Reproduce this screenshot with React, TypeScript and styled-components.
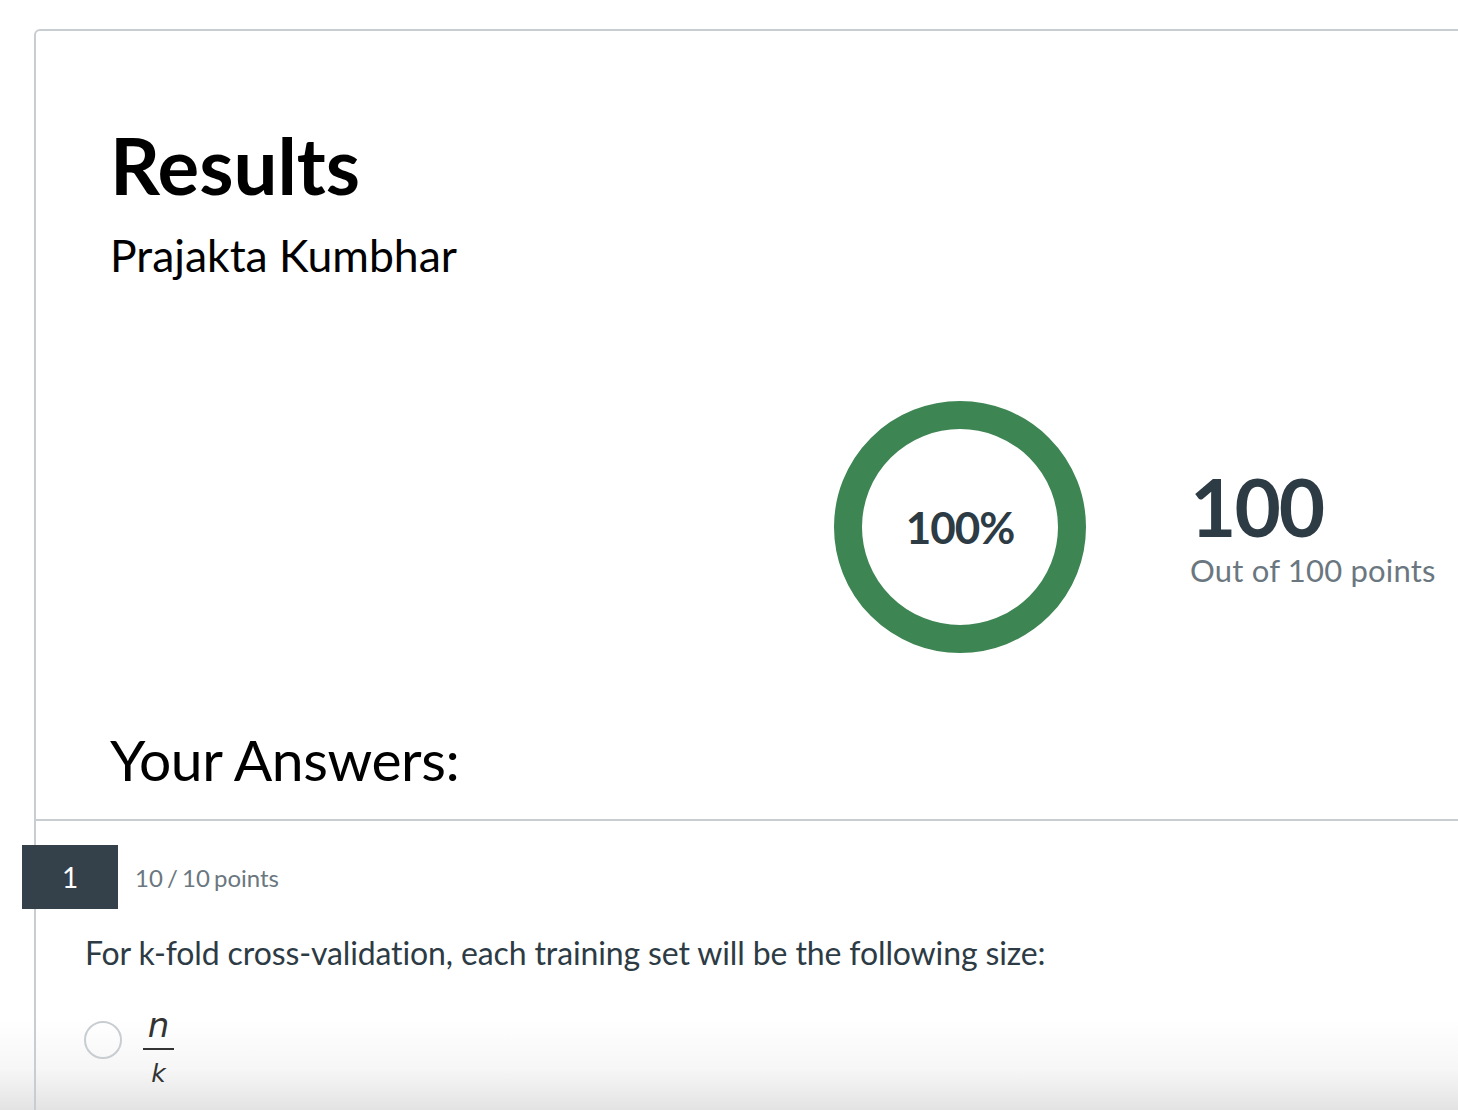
import React from "react";
import styled, { createGlobalStyle } from "styled-components";

const Global = createGlobalStyle`
  html, body { margin: 0; padding: 0; background: #ffffff; overflow: hidden; }
  body { font-family: Lato, "Open Sans", sans-serif; }
`;

const Page = styled.div`
  width: 1458px;
  height: 1110px;
  overflow: hidden;
  padding: 29px 0 0 34px;
  box-sizing: border-box;
  background: linear-gradient(
    to bottom,
    #ffffff 0px,
    #ffffff 1020px,
    #f6f6f6 1070px,
    #e3e3e3 1110px
  );
`;

const Card = styled.div`
  width: 1600px;
  min-height: 1200px;
  border: 2px solid #c7cdd1;
  border-radius: 6px;
  box-sizing: border-box;
  background: transparent;
`;

const Header = styled.div`
  padding: 95px 0 0 74px;
  border-bottom: 2px solid #c7cdd1;
`;

const Title = styled.h1`
  margin: 0;
  font-size: 78px;
  line-height: 1;
  font-weight: 700;
  color: #000;
`;

const Name = styled.div`
  margin-top: 26px;
  font-size: 44.5px;
  line-height: 50px;
  color: #000;
`;

const ScoreRow = styled.div`
  margin-top: 121px;
  margin-left: 724px;
  display: flex;
  align-items: center;
  gap: 104px;
`;

const Ring = styled.div`
  position: relative;
  width: 252px;
  height: 252px;
  display: flex;
  align-items: center;
  justify-content: center;
`;

const RingSvg = styled.svg`
  position: absolute;
  inset: 0;
`;

const Percent = styled.span`
  position: relative;
  font-size: 44px;
  font-weight: 700;
  color: #2d3b45;
  letter-spacing: -1px;
`;

const ScoreText = styled.div`
  display: flex;
  flex-direction: column;
`;

const Big = styled.div`
  font-size: 80px;
  line-height: 1;
  font-weight: 700;
  color: #2d3b45;
  letter-spacing: -2px;
`;

const OutOf = styled.div`
  margin-top: 6px;
  font-size: 31px;
  line-height: 36px;
  letter-spacing: 0.2px;
  color: #6b7780;
`;

const AnswersTitle = styled.h2`
  margin: 70px 0 24px;
  font-size: 57px;
  line-height: 72px;
  font-weight: 400;
  letter-spacing: -0.4px;
  color: #000;
`;

const Question = styled.div`
  padding-top: 24px;
`;

const QHead = styled.div`
  display: flex;
  align-items: center;
  gap: 17px;
  margin-left: -14px;
`;

const QNum = styled.div`
  width: 96px;
  height: 64px;
  background: #34404a;
  color: #fff;
  font-size: 28px;
  display: flex;
  align-items: center;
  justify-content: center;
`;

const QPoints = styled.div`
  font-size: 24px;
  word-spacing: -2px;
  color: #6b7780;
`;

const QText = styled.p`
  margin: 24px 0 0 49px;
  font-size: 32px;
  line-height: 40px;
  letter-spacing: -0.12px;
  color: #2d3b45;
`;

const AnswerRow = styled.div`
  margin: 34px 0 0 48px;
  display: flex;
  align-items: flex-start;
  gap: 21px;
`;

const Radio = styled.div`
  margin-top: 14px;
  width: 38px;
  height: 38px;
  border-radius: 50%;
  border: 2px solid #c7cdd1;
  box-sizing: border-box;
`;

const Frac = styled.div`
  display: flex;
  flex-direction: column;
  align-items: center;
  font-family: "DejaVu Sans", sans-serif;
  font-style: italic;
  color: #333;
`;

const FracTerm = styled.span<{ $size: number; $lh: number }>`
  font-size: ${(p) => p.$size}px;
  line-height: ${(p) => p.$lh}px;
  height: ${(p) => p.$lh}px;
`;

const FracLine = styled.div`
  width: 31px;
  height: 2px;
  background: #333;
  margin: 5px 0 9px;
`;

export default function App() {
  return (
    <>
      <Global />
      <Page>
        <Card>
          <Header>
            <Title>Results</Title>
            <Name>Prajakta Kumbhar</Name>
            <ScoreRow>
              <Ring>
                <RingSvg width="252" height="252" viewBox="0 0 252 252">
                  <circle cx="126" cy="126" r="112" fill="none" stroke="#3d8553" strokeWidth="28" />
                </RingSvg>
                <Percent>100%</Percent>
              </Ring>
              <ScoreText>
                <Big>100</Big>
                <OutOf>Out of 100 points</OutOf>
              </ScoreText>
            </ScoreRow>
            <AnswersTitle>Your Answers:</AnswersTitle>
          </Header>
          <Question>
            <QHead>
              <QNum>1</QNum>
              <QPoints>10 / 10 points</QPoints>
            </QHead>
            <QText>For k-fold cross-validation, each training set will be the following size:</QText>
            <AnswerRow>
              <Radio />
              <Frac>
                <FracTerm $size={34} $lh={36}>n</FracTerm>
                <FracLine />
                <FracTerm $size={25} $lh={30}>k</FracTerm>
              </Frac>
            </AnswerRow>
          </Question>
        </Card>
      </Page>
    </>
  );
}
